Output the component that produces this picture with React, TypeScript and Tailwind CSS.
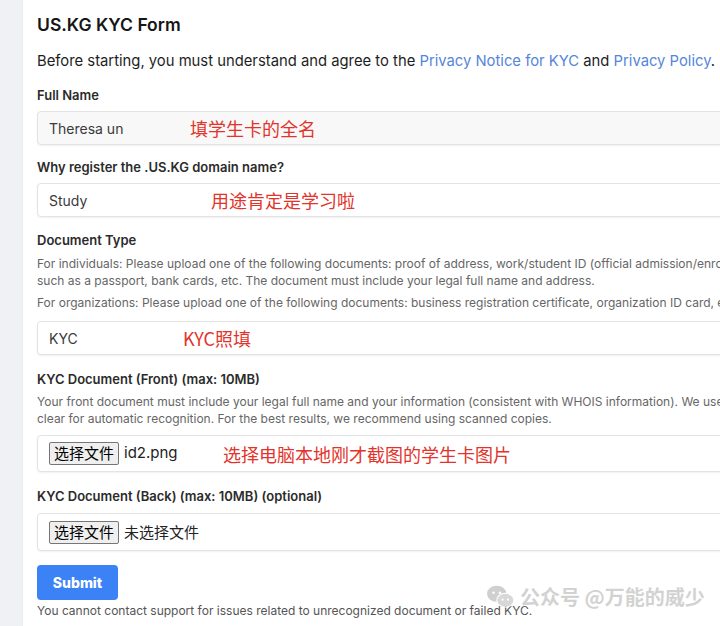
import React from "react";

const FONT = "font-['Inter','Noto_Sans_CJK_SC',sans-serif]";
const CJK = "font-['Noto_Sans_CJK_SC',sans-serif]";

// red hand-written notes lie over the inputs, so they sit absolute inside the box
function Note({ children, left }: { children: React.ReactNode; left: string }) {
  return (
    <span
      className={`${CJK} absolute top-1/2 -translate-y-1/2 whitespace-nowrap text-[18px] leading-none text-[#e2342c] ${left}`}
    >
      {children}
    </span>
  );
}

function TextBox({
  value,
  note,
  noteAt,
  gray,
}: {
  value: string;
  note: string;
  noteAt: string;
  gray?: boolean;
}) {
  return (
    <div
      className={`relative flex h-[34px] items-center rounded border border-[#e3e3e3] pl-[11px] shadow-[0_1px_2px_rgba(0,0,0,0.06)] ${
        gray ? "bg-[#f8f8f8]" : "bg-white"
      }`}
    >
      <span className="text-[14px] text-[#3a3a3a]">{value}</span>
      <Note left={noteAt}>{note}</Note>
    </div>
  );
}

function FileBox({ name, note, tall }: { name: string; note?: string; tall?: boolean }) {
  return (
    <div
      className={`relative flex items-center rounded border border-[#e3e3e3] bg-white pl-[11px] shadow-[0_1px_2px_rgba(0,0,0,0.06)] ${
        tall ? "h-[38px]" : "h-[37px]"
      }`}
    >
      <span
        className={`${CJK} flex h-[23px] w-[70px] items-center justify-center rounded-[2px] border border-[#767676] bg-[#efefef] text-[15px] text-black`}
      >
        选择文件
      </span>
      <span className={`ml-[5px] text-[15px] text-[#222] ${name === "id2.png" ? "" : CJK}`}>{name}</span>
      {note ? <Note left="left-[185px]">{note}</Note> : null}
    </div>
  );
}

function Label({ children, className = "" }: { children: React.ReactNode; className?: string }) {
  return (
    <div className={`h-[18px] text-[13px] font-semibold leading-[18px] text-[#2b2b2b] whitespace-nowrap ${className}`}>
      {children}
    </div>
  );
}

export default function App() {
  return (
    <div className={`${FONT} relative flex h-[626px] w-[720px] overflow-hidden bg-[#eff1f4]`}>
      <div className="ml-[23px] w-[1000px] shrink-0 bg-white pl-[14px] shadow-[0_0_3px_rgba(0,0,0,0.05)]">
        <h1 className="mt-[13px] h-[24px] text-[17.5px] font-semibold leading-[24px] text-[#161616]">
          US.KG KYC Form
        </h1>
        <p className="mt-[13px] h-[22px] whitespace-nowrap text-[14.8px] leading-[22px] text-[#1e1e1e]">
          Before starting, you must understand and agree to the{" "}
          <span className="text-[#5585dc]">Privacy Notice for KYC</span> and{" "}
          <span className="text-[#5585dc]">Privacy Policy</span>. Please read them carefully.
        </p>

        <Label className="mt-[14px]">Full Name</Label>
        <div className="mt-[7px]">
          <TextBox value="Theresa un" note="填学生卡的全名" noteAt="left-[152px]" gray />
        </div>

        <Label className="mt-[13px]">Why register the .US.KG domain name?</Label>
        <div className="mt-[7px]">
          <TextBox value="Study" note="用途肯定是学习啦" noteAt="left-[173px]" />
        </div>

        <Label className="mt-[14px]">Document Type</Label>
        <p className="mt-[6px] whitespace-nowrap text-[12px] leading-[17px] text-[#666]">
          For individuals: Please upload one of the following documents: proof of address, work/student ID (official
          admission/enrollment letter), ID card, driver&apos;s license,
          <br />
          such as a passport, bank cards, etc. The document must include your legal full name and address.
        </p>
        <p className="mt-[5px] whitespace-nowrap text-[12px] leading-[17px] text-[#666]">
          For organizations: Please upload one of the following documents: business registration certificate,
          organization ID card, etc.
        </p>
        <div className="mt-[10px]">
          <TextBox value="KYC" note="KYC照填" noteAt="left-[145px]" />
        </div>

        <Label className="mt-[15px]">KYC Document (Front) (max: 10MB)</Label>
        <p className="mt-[5px] whitespace-nowrap text-[12px] leading-[17px] text-[#666]">
          Your front document must include your legal full name and your information (consistent with WHOIS
          information). We use OCR, so the text must be
          <br />
          clear for automatic recognition. For the best results, we recommend using scanned copies.
        </p>
        <div className="mt-[8px]">
          <FileBox name="id2.png" note="选择电脑本地刚才截图的学生卡图片" />
        </div>

        <Label className="mt-[15px]">KYC Document (Back) (max: 10MB) (optional)</Label>
        <div className="mt-[8px]">
          <FileBox name="未选择文件" tall />
        </div>

        <button
          type="button"
          className="mt-[14px] flex h-[35px] w-[81px] items-center justify-center rounded bg-[#3b82f6] text-[14px] font-extrabold text-white"
        >
          Submit
        </button>
        <p className="mt-[2px] whitespace-nowrap text-[12px] leading-[17px] text-[#555]">
          You cannot contact support for issues related to unrecognized document or failed KYC.
        </p>
      </div>

      {/* watermark */}
      <div className="absolute left-[486px] top-[584px] flex items-center gap-[4px] opacity-80">
        <svg width="30" height="26" viewBox="0 0 28 24">
          <ellipse cx="10" cy="9" rx="9" ry="7.5" fill="#c4c4c4" />
          <ellipse cx="18" cy="15" rx="8" ry="6.5" fill="#cfcfcf" stroke="#fff" strokeWidth="1" />
          <circle cx="7" cy="8" r="1.2" fill="#fff" />
          <circle cx="13" cy="8" r="1.2" fill="#fff" />
          <circle cx="15.5" cy="14.5" r="1" fill="#fff" />
          <circle cx="20.5" cy="14.5" r="1" fill="#fff" />
        </svg>
        <span
          className={`${CJK} text-[20px] font-bold leading-none text-[#c8c8c8] [text-shadow:0_0_2px_#fff,0_0_2px_#fff]`}
        >
          公众号 @万能的威少
        </span>
      </div>
    </div>
  );
}
